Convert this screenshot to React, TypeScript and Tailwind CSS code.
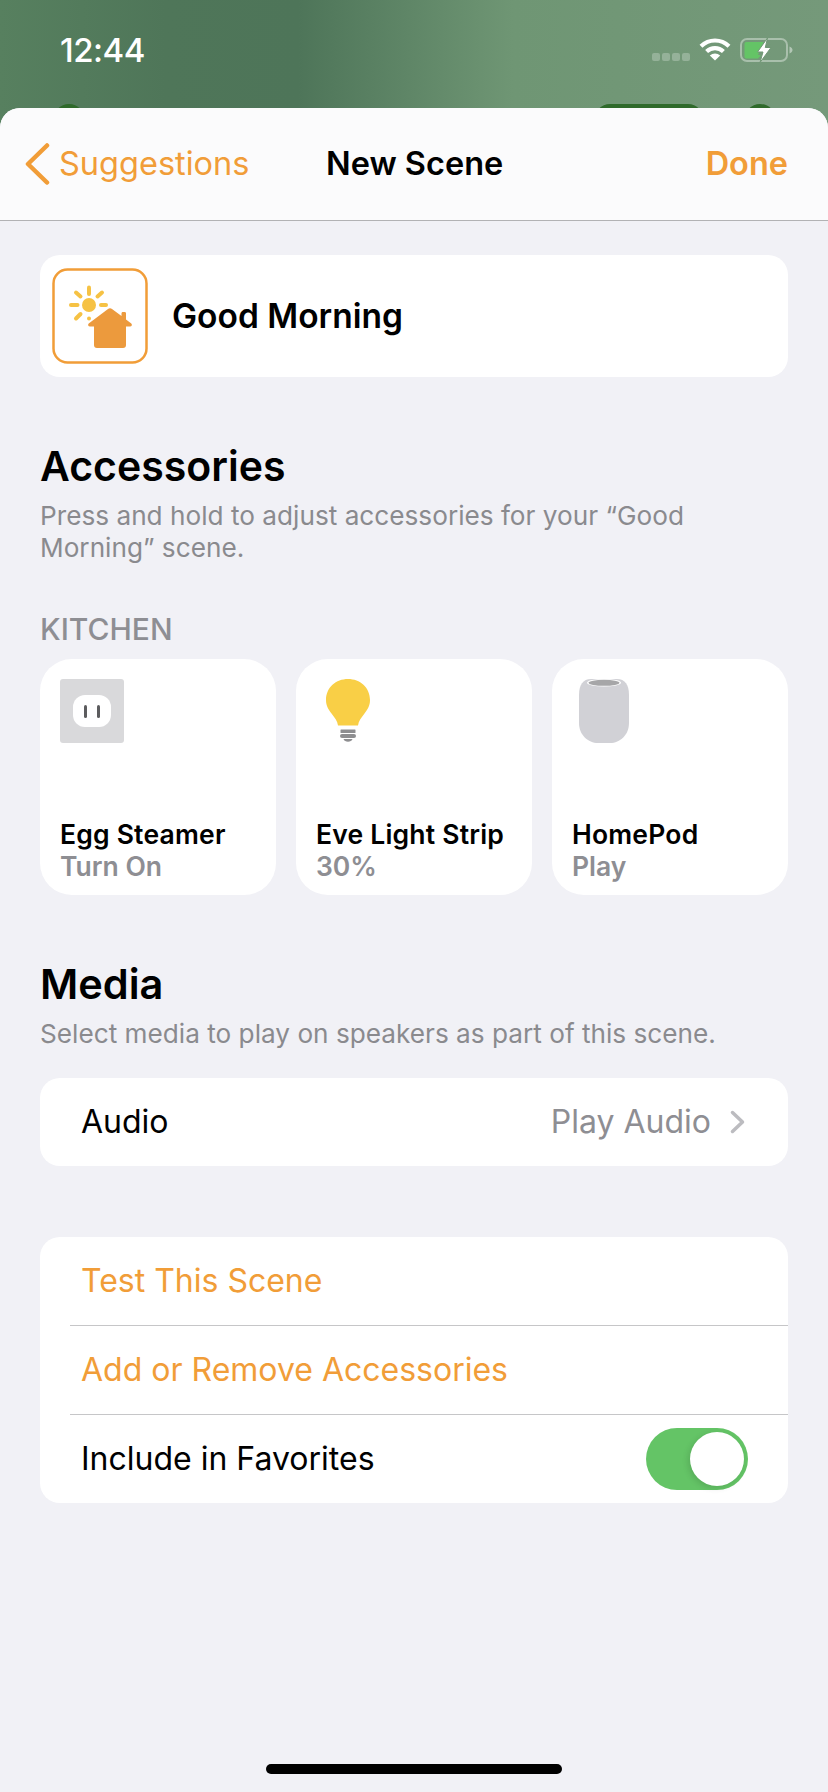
const orange = 'text-[#f19d38]';

function Wifi() {
  return (
    <svg className="w-[32px] h-[24px]" viewBox="0 0 32 24" fill="none" stroke="#fff" strokeWidth="4.2">
      <path d="M2 9.2C10 1.6 22 1.6 30 9.2" />
      <path d="M7.6 14.6C12.4 10 19.6 10 24.4 14.6" />
      <path d="M16 23.5L10.8 18.6C13.8 15.9 18.2 15.9 21.2 18.6Z" fill="#fff" stroke="none" />
    </svg>
  );
}

function Battery() {
  return (
    <svg className="w-[54px] h-[26px]" viewBox="0 0 54 26" fill="none">
      <rect x="1" y="2" width="46" height="22" rx="6" stroke="#fff" strokeOpacity="0.38" strokeWidth="2" />
      <path d="M49.5 9.5C51.5 10.3 52.5 11.5 52.5 13C52.5 14.5 51.5 15.7 49.5 16.5Z" fill="#fff" fillOpacity="0.45" />
      <path d="M6.5 5H23.5L18 18H21L18 21.5H6.5C5.2 21.5 4.5 20.8 4.5 19.5V7C4.5 5.7 5.2 5 6.5 5Z" fill="#64c466" />
      <path d="M27.5 1L17.5 15H23L20 25.5L31 10.5H25.3Z" fill="#fff" stroke="#709775" strokeWidth="1" />
    </svg>
  );
}

function SceneIcon() {
  return (
    <svg className="w-[96px] h-[96px]" viewBox="0 0 96 96" fill="none">
      <rect x="1.5" y="1.5" width="93" height="93" rx="14" stroke="#f19d38" strokeWidth="2.5" />
      <g stroke="#f6c244" strokeWidth="4" strokeLinecap="round">
        <path d="M37 19.5V26" />
        <path d="M24 24.5L28.5 28.5" />
        <path d="M50 24.5L45.5 28.5" />
        <path d="M19 37H25.5" />
        <path d="M49 37H54" />
        <path d="M28.5 46L24 50.5" />
      </g>
      <circle cx="37" cy="37" r="7" fill="#f6c244" />
      <circle cx="37" cy="50.5" r="2" fill="#f6c244" />
      <path d="M56 41C57.2 39.9 58.8 39.9 60 41L69.5 48V45.5C69.5 44.5 70 44 71 44H72.5C73.5 44 74 44.5 74 45.5V51.5L79.3 55.5C80.5 56.7 79.8 58.5 78 58.5H74V77C74 79 73 80 71 80H45C43 80 42 79 42 77V58.5H38C36.2 58.5 35.5 56.7 36.7 55.5Z" fill="#ec9a3d" />
    </svg>
  );
}

function Outlet() {
  return (
    <div className="w-[64px] h-[64px] bg-[#d9d9db] rounded-[3px] flex items-center justify-center">
      <div className="w-[38px] h-[32px] bg-white rounded-[12px] flex items-center justify-center gap-[10px]">
        <div className="w-[3px] h-[13px] bg-[#5c5c5e] rounded-full" />
        <div className="w-[3px] h-[13px] bg-[#5c5c5e] rounded-full" />
      </div>
    </div>
  );
}

function Bulb() {
  return (
    <svg className="w-[44px] h-[64px]" viewBox="0 0 44 64" fill="none">
      <path d="M22 0C34 0 44 8.5 44 21C44 27 41.5 30.5 38.5 34.5C35.5 38.5 32.5 42 32 46.5H12C11.5 42 8.5 38.5 5.5 34.5C2.5 30.5 0 27 0 21C0 8.5 10 0 22 0Z" fill="#f9cf46" />
      <rect x="14.5" y="50.5" width="15" height="3.5" fill="#8e8e90" rx="0.5" />
      <rect x="14" y="55" width="16" height="4" fill="#8e8e90" rx="2" />
      <path d="M17.5 60H26.5C25.5 63.5 18.5 63.5 17.5 60Z" fill="#8e8e90" />
    </svg>
  );
}

function HomePod() {
  return (
    <svg className="w-[50px] h-[64px]" viewBox="0 0 50 64" fill="none">
      <path d="M0 16C0 6 4 0 12 0H38C46 0 50 6 50 16V44C50 56 41 64 31 64H19C9 64 0 56 0 44Z" fill="#d1d1d6" />
      <ellipse cx="25" cy="3.8" rx="17" ry="3.8" fill="#fff" />
      <ellipse cx="25" cy="3.8" rx="15.5" ry="3" fill="#a6a6a8" />
    </svg>
  );
}

function Tile({ name, state, icon }: { name: string; state: string; icon: React.ReactNode }) {
  return (
    <div className="h-[236px] bg-white rounded-[32px] px-[20px] pt-[20px] flex flex-col">
      <div className="h-[64px] flex">{icon}</div>
      <div className="mt-[75px] text-[26.5px] leading-[32px] font-semibold text-black tracking-[0.2px] whitespace-nowrap">{name}</div>
      <div className="text-[26.5px] leading-[32px] font-semibold text-[#8e8e93] whitespace-nowrap">{state}</div>
    </div>
  );
}

export default function App() {
  return (
    <div className="w-[828px] h-[1792px] overflow-hidden bg-[linear-gradient(90deg,#57805f_0%,#4f7659_20%,#4e7559_36%,#6f9674_62%,#75997a_100%)] font-['Inter',sans-serif] flex flex-col">
      {/* status bar */}
      <div className="h-[108px] shrink-0 relative flex justify-between px-[60px] pt-[30px]">
        <span className="text-[33px] leading-[40px] font-medium text-white tracking-[-0.5px]">12:44</span>
        <div className="flex items-start gap-[9px] mr-[-26px] pt-[7px]">
          <div className="flex gap-[2px] mt-[16px]">
            <div className="w-[8px] h-[8px] rounded-[2px] bg-white/25" />
            <div className="w-[8px] h-[8px] rounded-[2px] bg-white/25" />
            <div className="w-[8px] h-[8px] rounded-[2px] bg-white/25" />
            <div className="w-[8px] h-[8px] rounded-[2px] bg-white/25" />
          </div>
          <Wifi />
          <Battery />
        </div>
        {/* home tiles peeking out behind the sheet */}
        <div className="absolute left-[53px] top-[104px] w-[32px] h-[32px] rounded-full bg-[#2f6a2b]" />
        <div className="absolute left-[594px] top-[104px] w-[110px] h-[32px] rounded-full bg-[#2f6a2b]" />
        <div className="absolute left-[744px] top-[104px] w-[32px] h-[32px] rounded-full bg-[#2f6a2b]" />
      </div>

      {/* sheet */}
      <div className="relative flex-1 bg-[#f1f1f6] rounded-t-[20px] overflow-hidden flex flex-col">
        <div className="h-[113px] shrink-0 bg-[#fbfbfc] border-b border-[#b2b2b4] relative flex items-center justify-between pl-[25px] pr-[40px]">
          <div className="flex items-center gap-[9px]">
            <svg className="w-[25px] h-[42px]" viewBox="0 0 25 42" fill="none" stroke="#f19d38" strokeWidth="4.5" strokeLinecap="round" strokeLinejoin="round">
              <path d="M22 2.5L3 21L22 39.5" />
            </svg>
            <span className={`text-[32.5px] leading-[40px] ${orange}`}>Suggestions</span>
          </div>
          <span className="absolute left-[326px] text-[32.5px] leading-[40px] font-semibold text-black">New Scene</span>
          <span className={`text-[32.5px] leading-[40px] font-semibold ${orange}`}>Done</span>
        </div>

        <div className="px-[40px] flex flex-col">
          <div className="mt-[34px] h-[122px] bg-white rounded-[20px] flex items-center pl-[12px]">
            <SceneIcon />
            <span className="ml-[24px] text-[33.5px] font-semibold text-black">Good Morning</span>
          </div>

          <h2 className="mt-[63px] text-[41px] leading-[52px] font-semibold text-black">Accessories</h2>
          <p className="mt-[8px] text-[26.2px] leading-[32px] text-[#8a8a8e]">Press and hold to adjust accessories for your “Good Morning” scene.</p>

          <div className="mt-[49px] text-[30px] leading-[32px] font-medium text-[#8e8e93]">KITCHEN</div>
          <div className="mt-[14px] grid grid-cols-3 gap-[20px]">
            <Tile name="Egg Steamer" state="Turn On" icon={<Outlet />} />
            <Tile name="Eve Light Strip" state="30%" icon={<div className="pl-[10px]"><Bulb /></div>} />
            <Tile name="HomePod" state="Play" icon={<div className="pl-[7px]"><HomePod /></div>} />
          </div>

          <h2 className="mt-[63px] text-[41.5px] leading-[52px] font-semibold text-black">Media</h2>
          <p className="mt-[8px] text-[26.2px] leading-[32px] text-[#8a8a8e]">Select media to play on speakers as part of this scene.</p>

          <div className="mt-[28px] h-[88px] bg-white rounded-[20px] flex items-center justify-between pl-[41px] pr-[32px]">
            <span className="text-[32px] text-black">Audio</span>
            <div className="flex items-center gap-[19px] mr-[11px]">
              <span className="text-[32px] text-[#8e8e93]">Play Audio</span>
              <svg className="w-[15px] h-[24px]" viewBox="0 0 15 24" fill="none" stroke="#bcbcc0" strokeWidth="3.5" strokeLinecap="round" strokeLinejoin="round">
                <path d="M2.5 2.5L12.5 12L2.5 21.5" />
              </svg>
            </div>
          </div>

          <div className="mt-[71px] bg-white rounded-[20px] flex flex-col pl-[41px]">
            <div className={`h-[88px] flex items-center text-[32px] ${orange}`}>Test This Scene</div>
            <div className="h-px bg-[#c6c6c8] ml-[-11px]" />
            <div className={`h-[88px] flex items-center text-[32px] ${orange}`}>Add or Remove Accessories</div>
            <div className="h-px bg-[#c6c6c8] ml-[-11px]" />
            <div className="h-[88px] flex items-center justify-between pr-[40px] text-[32px] text-black">
              <span>Include in Favorites</span>
              <div className="w-[102px] h-[62px] bg-[#64c466] rounded-full flex items-center justify-end pr-[4px]">
                <div className="w-[54px] h-[54px] bg-white rounded-full shadow-[-2px_2px_6px_rgba(0,0,0,0.12)]" />
              </div>
            </div>
          </div>
        </div>

        <div className="absolute left-[266px] bottom-[18px] w-[296px] h-[10px] rounded-full bg-black" />
      </div>
    </div>
  );
}
